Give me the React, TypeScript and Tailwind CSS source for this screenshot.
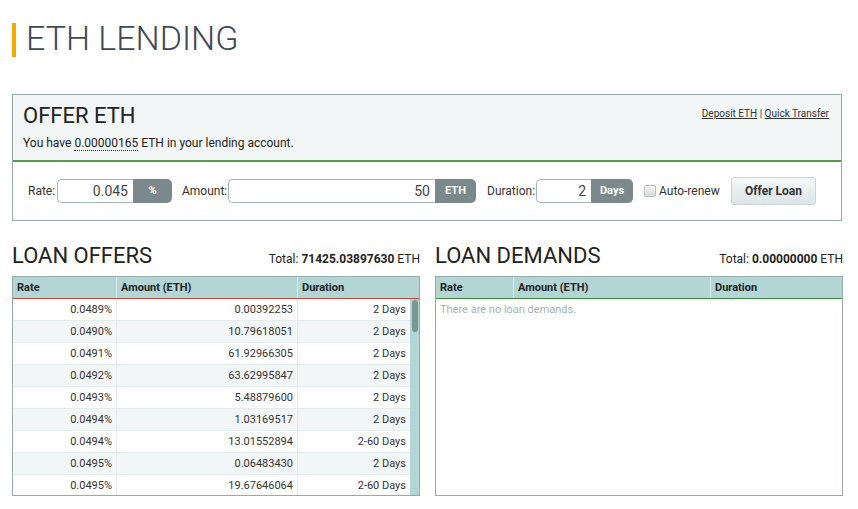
import React from "react";

const offers: [string, string, string][] = [
  ["0.0489%", "0.00392253", "2 Days"],
  ["0.0490%", "10.79618051", "2 Days"],
  ["0.0491%", "61.92966305", "2 Days"],
  ["0.0492%", "63.62995847", "2 Days"],
  ["0.0493%", "5.48879600", "2 Days"],
  ["0.0494%", "1.03169517", "2 Days"],
  ["0.0494%", "13.01552894", "2-60 Days"],
  ["0.0495%", "0.06483430", "2 Days"],
  ["0.0495%", "19.67646064", "2-60 Days"],
];

function InputGroup({ value, addon, inputW, addonW }: { value: string; addon: string; inputW: string; addonW: string }) {
  return (
    <div className="flex h-[24px] shrink-0">
      <div className={`${inputW} h-full border border-[#a3b5b5] border-r-0 rounded-l-[5px] bg-white text-right pr-[5px] text-[14px] leading-[22px] text-[#444]`}>
        {value}
      </div>
      <div className={`${addonW} h-full bg-[#7b898d] rounded-r-[5px] text-white font-bold text-[11px] leading-[24px] text-center`}>
        {addon}
      </div>
    </div>
  );
}

export default function App() {
  return (
    <div className="min-h-screen bg-white font-['Roboto',sans-serif] text-[#333]">
      <div className="pl-[12px] pt-[23px] w-[842px]">
        <div className="flex items-start h-[34px]">
          <div className="w-[4px] h-[34px] bg-[#f5a800]" />
          <h1 className="ml-[10px] mt-[-2px] text-[34px] font-light text-[#3f4953] leading-[34px]">ETH LENDING</h1>
        </div>

        <div className="mt-[37px] border border-[#95aaaa]">
          <div className="bg-[#f3f6f6] border-b-2 border-[#5b9b4b] px-[10px] pt-[8px] h-[67px]">
            <div className="flex justify-between items-start">
              <h2 className="text-[22px] leading-[26px] text-[#222]">OFFER ETH</h2>
              <div className="text-[10px] leading-[14px] mt-[4px] mr-[2px] text-[#333]">
                <span className="underline">Deposit ETH</span> | <span className="underline">Quick Transfer</span>
              </div>
            </div>
            <div className="text-[12px] mt-[6px] leading-[16px] text-[#222]">
              You have <span className="border-b border-dotted border-[#333]">0.00000165</span> ETH in your lending account.
            </div>
          </div>
          <div className="h-[58px] flex items-center pl-[15px] text-[12px] text-[#333] whitespace-nowrap">
            <span className="w-[29px] shrink-0">Rate:</span>
            <InputGroup value="0.045" addon="%" inputW="w-[76px]" addonW="w-[39px]" />
            <span className="ml-[10px] w-[46px] shrink-0">Amount:</span>
            <InputGroup value="50" addon="ETH" inputW="w-[207px]" addonW="w-[41px]" />
            <span className="ml-[11px] w-[49px] shrink-0">Duration:</span>
            <InputGroup value="2" addon="Days" inputW="w-[55px]" addonW="w-[42px]" />
            <div className="ml-[11px] w-[12px] h-[12px] shrink-0 border border-[#b8c0c2] rounded-[2px] bg-gradient-to-b from-[#f4f4f4] to-[#dcdcdc]" />
            <span className="ml-[3px] w-[61px] shrink-0">Auto-renew</span>
            <button className="ml-[11px] w-[85px] h-[28px] shrink-0 rounded-[3px] border border-[#c9d5d8] bg-gradient-to-b from-[#f5f8f9] to-[#dbe4e7] font-bold text-[12px] text-[#333]">
              Offer Loan
            </button>
          </div>
        </div>

        <div className="mt-[21px] flex justify-between">
          <div className="w-[408px]">
            <div className="flex justify-between items-end h-[34px]">
              <h2 className="text-[22px] leading-[26px] text-[#222] mb-[7px]">LOAN OFFERS</h2>
              <div className="text-[12px] leading-[18px] mb-[8px] text-[#222]">Total: <b>71425.03897630</b> ETH</div>
            </div>
            <div className="border border-[#95aaaa] h-[220px] bg-[#b3d5d5] overflow-hidden">
              <div className="flex h-[22px] border-b border-[#c7493a] text-[11px] font-bold text-[#222] leading-[21px]">
                <div className="w-[104px] pl-[4px] border-r border-[#dcebeb]">Rate</div>
                <div className="w-[181px] pl-[4px] border-r border-[#dcebeb]">Amount (ETH)</div>
                <div className="flex-1 pl-[4px]">Duration</div>
              </div>
              <div className="flex">
                <div className="w-[397px]">
                  {offers.map((r, i) => (
                    <div key={i} className={`flex h-[22px] border-b border-[#e2ecec] text-[11px] leading-[21px] text-[#333] ${i % 2 === 1 ? "bg-[#f3f6f6]" : "bg-white"}`}>
                      <div className="w-[104px] pr-[4px] text-right border-r border-[#e2ecec]">{r[0]}</div>
                      <div className="w-[181px] pr-[4px] text-right border-r border-[#e2ecec]">{r[1]}</div>
                      <div className="flex-1 pr-[4px] text-right">{r[2]}</div>
                    </div>
                  ))}
                </div>
                <div className="flex-1 flex justify-center pt-[1px]">
                  <div className="w-[6px] h-[32px] rounded-[3px] bg-[#7c9696]" />
                </div>
              </div>
            </div>
          </div>

          <div className="w-[408px] mr-[-1px]">
            <div className="flex justify-between items-end h-[34px]">
              <h2 className="text-[22px] leading-[26px] text-[#222] mb-[7px]">LOAN DEMANDS</h2>
              <div className="text-[12px] leading-[18px] mb-[8px] text-[#222]">Total: <b>0.00000000</b> ETH</div>
            </div>
            <div className="border border-[#95aaaa] h-[220px] bg-white">
              <div className="flex h-[22px] bg-[#b3d5d5] border-b border-[#3b8b3b] text-[11px] font-bold text-[#222] leading-[21px]">
                <div className="w-[78px] pl-[4px] border-r border-[#dcebeb]">Rate</div>
                <div className="w-[197px] pl-[4px] border-r border-[#dcebeb]">Amount (ETH)</div>
                <div className="flex-1 pl-[4px]">Duration</div>
              </div>
              <div className="text-[11px] text-[#9fb3b5] pl-[4px] pt-[3px] leading-[16px]">There are no loan demands.</div>
            </div>
          </div>
        </div>
      </div>
    </div>
  );
}
